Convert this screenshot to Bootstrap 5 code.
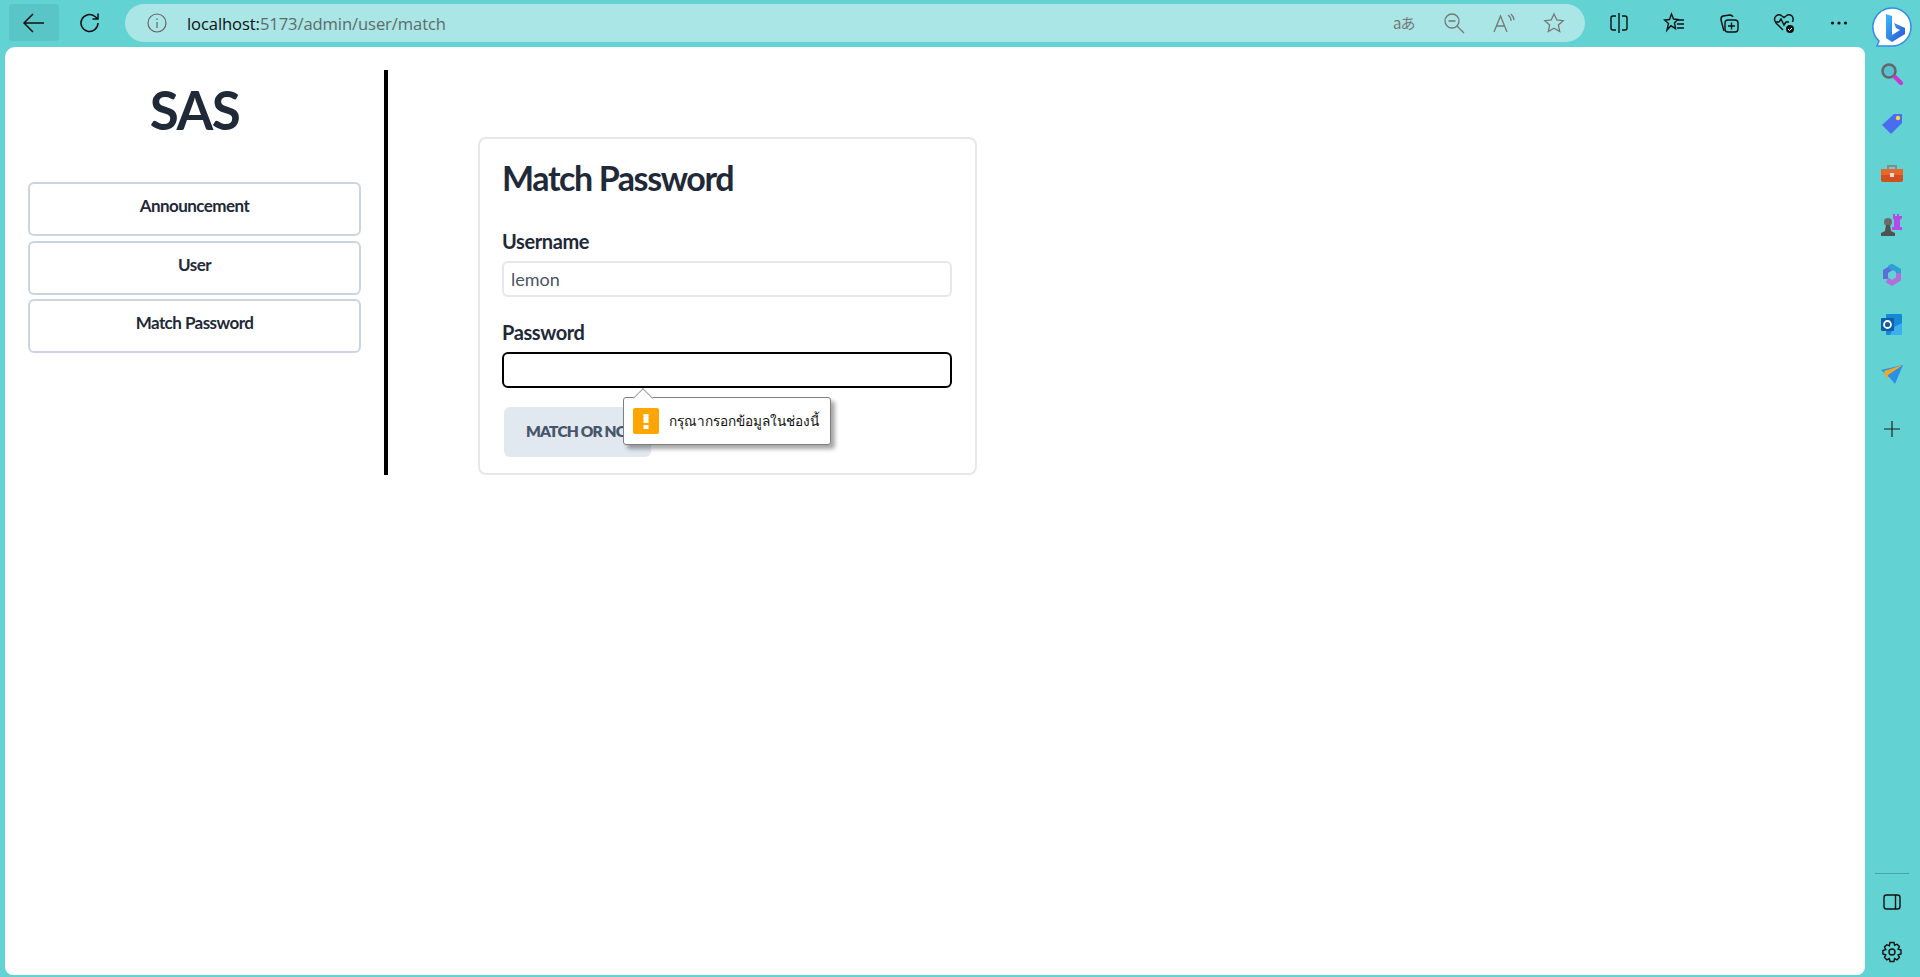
<!doctype html>
<html lang="en">
<head>
<meta charset="utf-8">
<title>SAS</title>
<link rel="stylesheet" href="https://cdn.jsdelivr.net/npm/bootstrap@5.3.0/dist/css/bootstrap.min.css">
<style>
html,body{height:100%;overflow:hidden}
body{background:#62d2d3;font-family:"Lato","Noto Sans",sans-serif;color:#1f2937}
.shell{height:977px}
.topbar{height:47px;flex:none;padding:4px 0 0 9px}
.tool-btn{width:50px;height:37px;flex:none;display:flex;align-items:center;justify-content:center;border-radius:3px}
.tool-btn.is-hover{background:#5ac5c6}
.tool-btn.is-reload{margin-left:6px}
.addr{width:1460px;height:38px;background:#a9e6e5;border-radius:19px;margin-left:10px;padding:0 20px 0 22px;flex:none}
.url{font:16.600px "Open Sans","Noto Sans",sans-serif;color:#5f6a6b;margin-left:20px;letter-spacing:-.1px}
.url b{font-weight:400;color:#111}
.addr-icons{gap:28px}
.translate{width:22px;font:15px/22px "Noto Sans CJK JP",sans-serif;color:#777;white-space:nowrap;letter-spacing:-1px}
.browser-icons{margin-left:6px}
.browser-icons .tool-btn{width:55px}
.bing{width:44px;height:44px;margin:1px 0 0 4px;flex:none}
.mid{flex:1;min-height:0;padding-bottom:2px}
.page{width:1860px;margin-left:5px;background:#fff;border-radius:10px 8px 8px 8px;padding-top:23px;flex:none}
.rail{width:54px;flex:none;padding-top:2px;margin-bottom:-2px}
.rail-ico{height:50.200px;display:flex;align-items:center;justify-content:center}
.rail-ico.is-add{margin-top:4px}
.rail-rule{width:34px;border-top:1px solid #47a5a6;margin:0 auto 3px}
.side{width:383px;height:405px;border-right:4px solid #000;padding:0 23px;flex:none}
.brand{font-size:53px;font-weight:700;line-height:1;letter-spacing:-1.500px;color:#1f2937;text-align:center;margin:13px 0 0;height:99px}
.side-link{display:flex;align-items:center;justify-content:center;height:54px;margin-bottom:4.500px;padding-bottom:6px;border:2px solid #cbd5e1;border-radius:6px;background:#fff;color:#1f2937;font-weight:700;font-size:17px;letter-spacing:-.55px;text-decoration:none}
.form-wrap{margin-left:90px;margin-top:67px}
.panel{width:499px;height:338px;border:2px solid #e5e7eb;border-radius:8px;padding:20px 23px 20px 22px;position:relative}
.panel h1{font-size:34px;font-weight:700;line-height:40px;letter-spacing:-1.400px;margin:-1px 0 31px;color:#1f2937}
.fld-label{display:block;font-size:20px;font-weight:700;letter-spacing:-.4px;line-height:24px;margin-bottom:8px;color:#1f2937}
.fld{display:block;width:100%;height:36px;border:2px solid #e5e7eb;border-radius:6px;padding:0 7px;font:18px "Lato",sans-serif;color:#4b5563;background:#fff;margin-bottom:23px;outline:0}
.fld.is-focus{border-color:#000;margin-bottom:19px}
.go{width:147px;height:50px;border:0;border-radius:6px;background:#e2e8f0;color:#475569;font-weight:800;font-size:15.500px;letter-spacing:-.85px;margin-left:2px;text-align:left;padding:0 0 0 22px;white-space:nowrap;overflow:hidden}
.bubble{position:absolute;left:143px;top:258px;width:208px;height:48px;background:#fff;border:1px solid #7f7f7f;border-radius:3px;box-shadow:4px 4px 4px rgba(0,0,0,.35);display:flex;align-items:center;padding-left:9px;gap:10px}
.bubble::before{content:"";position:absolute;left:12px;top:-7px;width:14px;height:14px;background:#fff;border-left:1px solid #a0a0a0;border-top:1px solid #a0a0a0;transform:rotate(45deg)}
.warn{width:26px;height:26px;background:#ffa500;border-radius:2px;flex:none;position:relative;display:block}
.bubble-text{font:13.600px "Noto Sans","DejaVu Sans",sans-serif;color:#111;white-space:nowrap;position:relative}
</style>
</head>
<body>
<div class="shell d-flex flex-column">
  <div class="topbar d-flex align-items-start">
    <div class="tool-btn is-hover"><svg width="24" height="24" viewBox="0 0 24 24" fill="none" stroke="#111" stroke-width="1.500"><path d="M2 12h20M11 3l-9 9 9 9"/></svg></div>
    <div class="tool-btn is-reload"><svg width="24" height="24" viewBox="0 0 24 24" fill="none" stroke="#111" stroke-width="1.500"><path d="M20 12a8.500 8.500 0 1 1-3-6.500L20 8M20 2.500V8h-5.500"/></svg></div>
    <div class="addr d-flex align-items-center">
      <svg width="20" height="20" viewBox="0 0 20 20" fill="none" stroke="#666" stroke-width="1.200"><circle cx="10" cy="10" r="9"/><path d="M10 9v6M10 5.500v1.600"/></svg>
      <div class="url"><b>localhost:</b>5173/admin/user/match</div>
      <div class="addr-icons d-flex align-items-center ms-auto">
        <span class="translate">aあ</span>
        <svg width="22" height="22" viewBox="0 0 22 22" fill="none" stroke="#777" stroke-width="1.300"><circle cx="9" cy="9" r="7"/><path d="M5.500 9h7M14 14l7 7"/></svg>
        <svg width="22" height="22" viewBox="0 0 22 22" fill="none" stroke="#777" stroke-width="1.300"><path d="M1 20 7.500 4 14 20M3.500 14h8M15 3q3 2 3 6M18 2q3 3 3 6"/></svg>
        <svg width="22" height="22" viewBox="0 0 22 22" fill="none" stroke="#777" stroke-width="1.300"><path d="m11 2 2.800 6 6.400.7-4.800 4.400 1.300 6.400L11 16.300l-5.700 3.200 1.300-6.400L1.800 8.700 8.200 8z"/></svg>
      </div>
    </div>
    <div class="browser-icons d-flex">
      <div class="tool-btn"><svg width="20" height="20" viewBox="0 0 20 20" fill="none" stroke="#111" stroke-width="1.400"><path d="M7 3H4a2 2 0 0 0-2 2v10a2 2 0 0 0 2 2h3M13 3h3a2 2 0 0 1 2 2v10a2 2 0 0 1-2 2h-3M10 0v20"/></svg></div>
      <div class="tool-btn"><svg width="22" height="22" viewBox="0 0 22 22" fill="none" stroke="#111" stroke-width="1.400"><path d="m8.500 2 2 5 4.500.5-3.500 3.200 1 6-4.500-3L4 18l1.500-6.500L1.500 8 6.500 7.500zM14 8h7M14 12h7M14 16h7"/></svg></div>
      <div class="tool-btn"><svg width="22" height="22" viewBox="0 0 22 22" fill="none" stroke="#111" stroke-width="1.400"><path d="M6 19 3 8q-.5-3 2-4l7-1q2 0 3 2"/><rect x="7" y="8" width="13" height="12" rx="3"/><path d="M13.500 10.500v7M10 14h7"/></svg></div>
      <div class="tool-btn"><svg width="22" height="22" viewBox="0 0 22 22" fill="none" stroke="#111" stroke-width="1.400"><path d="M10 18 3 11Q0 7 3 4q3-2.500 6 0l2 1.500 2-1.500q3-2.500 6 0 2 2.500.5 6M2 10h4l2-3 3 6 2-3h3"/><circle cx="17" cy="17" r="4" fill="#111" stroke="none"/><path d="m15 17 1.500 1.500L19 16" stroke="#fff" stroke-width="1"/></svg></div>
      <div class="tool-btn"><svg width="18" height="4" viewBox="0 0 18 4" fill="#111"><circle cx="2.500" cy="2" r="1.600"/><circle cx="9" cy="2" r="1.600"/><circle cx="15.500" cy="2" r="1.600"/></svg></div>
    </div>
    <svg class="bing" viewBox="0 0 44 44"><defs><linearGradient id="bg" x1="0" y1="0" x2="1" y2="1"><stop offset="0" stop-color="#37bdf8"/><stop offset="1" stop-color="#2a4fd6"/></linearGradient></defs><path d="M22 3a19 19 0 0 1 0 38H8l-1 0 2-5A19 19 0 0 1 22 3z" fill="#fff" stroke="#2f8fe8" stroke-width="1.500"/><path d="M16 9l6 2v19l8-5-4-2-2-5 11 5v6L22 37l-6-4z" fill="url(#bg)"/></svg>
  </div>
  <div class="mid d-flex">
    <div class="page d-flex align-items-start">
      <aside class="side">
        <div class="brand">SAS</div>
        <a class="side-link" href="#">Announcement</a>
        <a class="side-link" href="#">User</a>
        <a class="side-link" href="#">Match Password</a>
      </aside>
      <div class="form-wrap">
        <form class="panel">
          <h1>Match Password</h1>
          <label class="fld-label" for="u">Username</label>
          <input id="u" class="fld" value="lemon">
          <label class="fld-label" for="p">Password</label>
          <input id="p" class="fld is-focus" type="password">
          <button type="button" class="go">MATCH OR NOT</button>
          <div class="bubble"><svg class="warn" viewBox="0 0 26 26"><rect x="10.500" y="6" width="5" height="9" fill="#fff"/><rect x="10.500" y="17" width="5" height="4" fill="#fff"/></svg><div class="bubble-text">กรุณากรอกข้อมูลในช่องนี้</div></div>
        </form>
      </div>
    </div>
    <div class="rail d-flex flex-column">
      <div class="rail-ico"><svg width="24" height="24" viewBox="0 0 24 24" fill="none"><circle cx="9" cy="9" r="6.500" stroke="#666" stroke-width="2.500" fill="#55c3d0"/><path d="m15 15 6 6" stroke="#c935d0" stroke-width="4" stroke-linecap="round"/></svg></div>
      <div class="rail-ico"><svg width="24" height="24" viewBox="0 0 24 24"><path d="M14 2h8v9L11 22 2 13z" fill="#4a6cf0"/><circle cx="18" cy="6" r="2.200" fill="#ffd43b"/></svg></div>
      <div class="rail-ico"><svg width="24" height="24" viewBox="0 0 24 24"><path d="M8 8V4h8v4" fill="none" stroke="#888" stroke-width="1.800"/><rect x="1" y="7" width="22" height="13" rx="2" fill="#d2501f"/><rect x="1" y="7" width="22" height="6" fill="#e8682c"/><rect x="10" y="11" width="4" height="4" fill="#ddd"/></svg></div>
      <div class="rail-ico"><svg width="24" height="24" viewBox="0 0 24 24"><path d="M13 1h2v2h2V1h2v2h3v2l-2 2v7h2v3H12v-3h2V7l-1-2z" fill="#b44ae8"/><circle cx="8" cy="9" r="4" fill="#6b6b6b"/><path d="M1 23v-3l4-2 1-6h4l1 6 4 2v3z" fill="#505050"/></svg></div>
      <div class="rail-ico"><svg width="24" height="24" viewBox="0 0 24 24" fill="none" stroke-width="5"><path d="M5.500 16V8.500L12 4.500" stroke="#5b6fd8"/><path d="M9 4.500 12 3.500 18.500 7.500V11" stroke="#2f9fd8"/><path d="M18.500 10v6L12 20 7 17" stroke="#b070d8"/></svg></div>
      <div class="rail-ico"><svg width="24" height="24" viewBox="0 0 24 24"><rect x="6" y="1" width="16" height="21" rx="1" fill="#1787d8"/><path d="m14 14 8-4v12H10z" fill="#3cb0ee"/><rect x="1" y="5" width="13" height="13" rx="1" fill="#0f5fa8"/><circle cx="7.500" cy="11.500" r="3.500" fill="none" stroke="#fff" stroke-width="1.800"/></svg></div>
      <div class="rail-ico"><svg width="24" height="24" viewBox="0 0 24 24"><path d="M1 7 23 2 15 21 10 15z" fill="#2b8fe8"/><path d="M4 8 23 2 8 12l-1 5z" fill="#f5a623"/></svg></div>
      <div class="rail-ico is-add"><svg width="16" height="16" viewBox="0 0 16 16" stroke="#222" stroke-width="1.200"><path d="M0 8h16M8 0v16"/></svg></div>
      <div class="mt-auto">
        <div class="rail-rule"></div>
        <div class="rail-ico"><svg width="20" height="18" viewBox="0 0 20 18" fill="none" stroke="#111" stroke-width="1.400"><rect x="2" y="2" width="16" height="14" rx="2.500"/><path d="M13.500 2v14"/></svg></div>
        <div class="rail-ico"><svg width="22" height="22" viewBox="0 0 22 22" fill="none" stroke="#111" stroke-width="1.400"><circle cx="11" cy="11" r="3"/><path d="m9 1.500 4 0 .6 2.700 2.500-1 2.300 2.300-1.300 2.500 2.900 1.100v3.800l-2.900 1 1.300 2.500-2.300 2.400-2.500-1.200-.7 2.900H9l-.7-2.900-2.500 1.200-2.300-2.400 1.300-2.500-2.900-1V9.600l2.900-1.100-1.300-2.500 2.300-2.300 2.500 1z"/></svg></div>
      </div>
    </div>
  </div>
</div>
</body>
</html>
